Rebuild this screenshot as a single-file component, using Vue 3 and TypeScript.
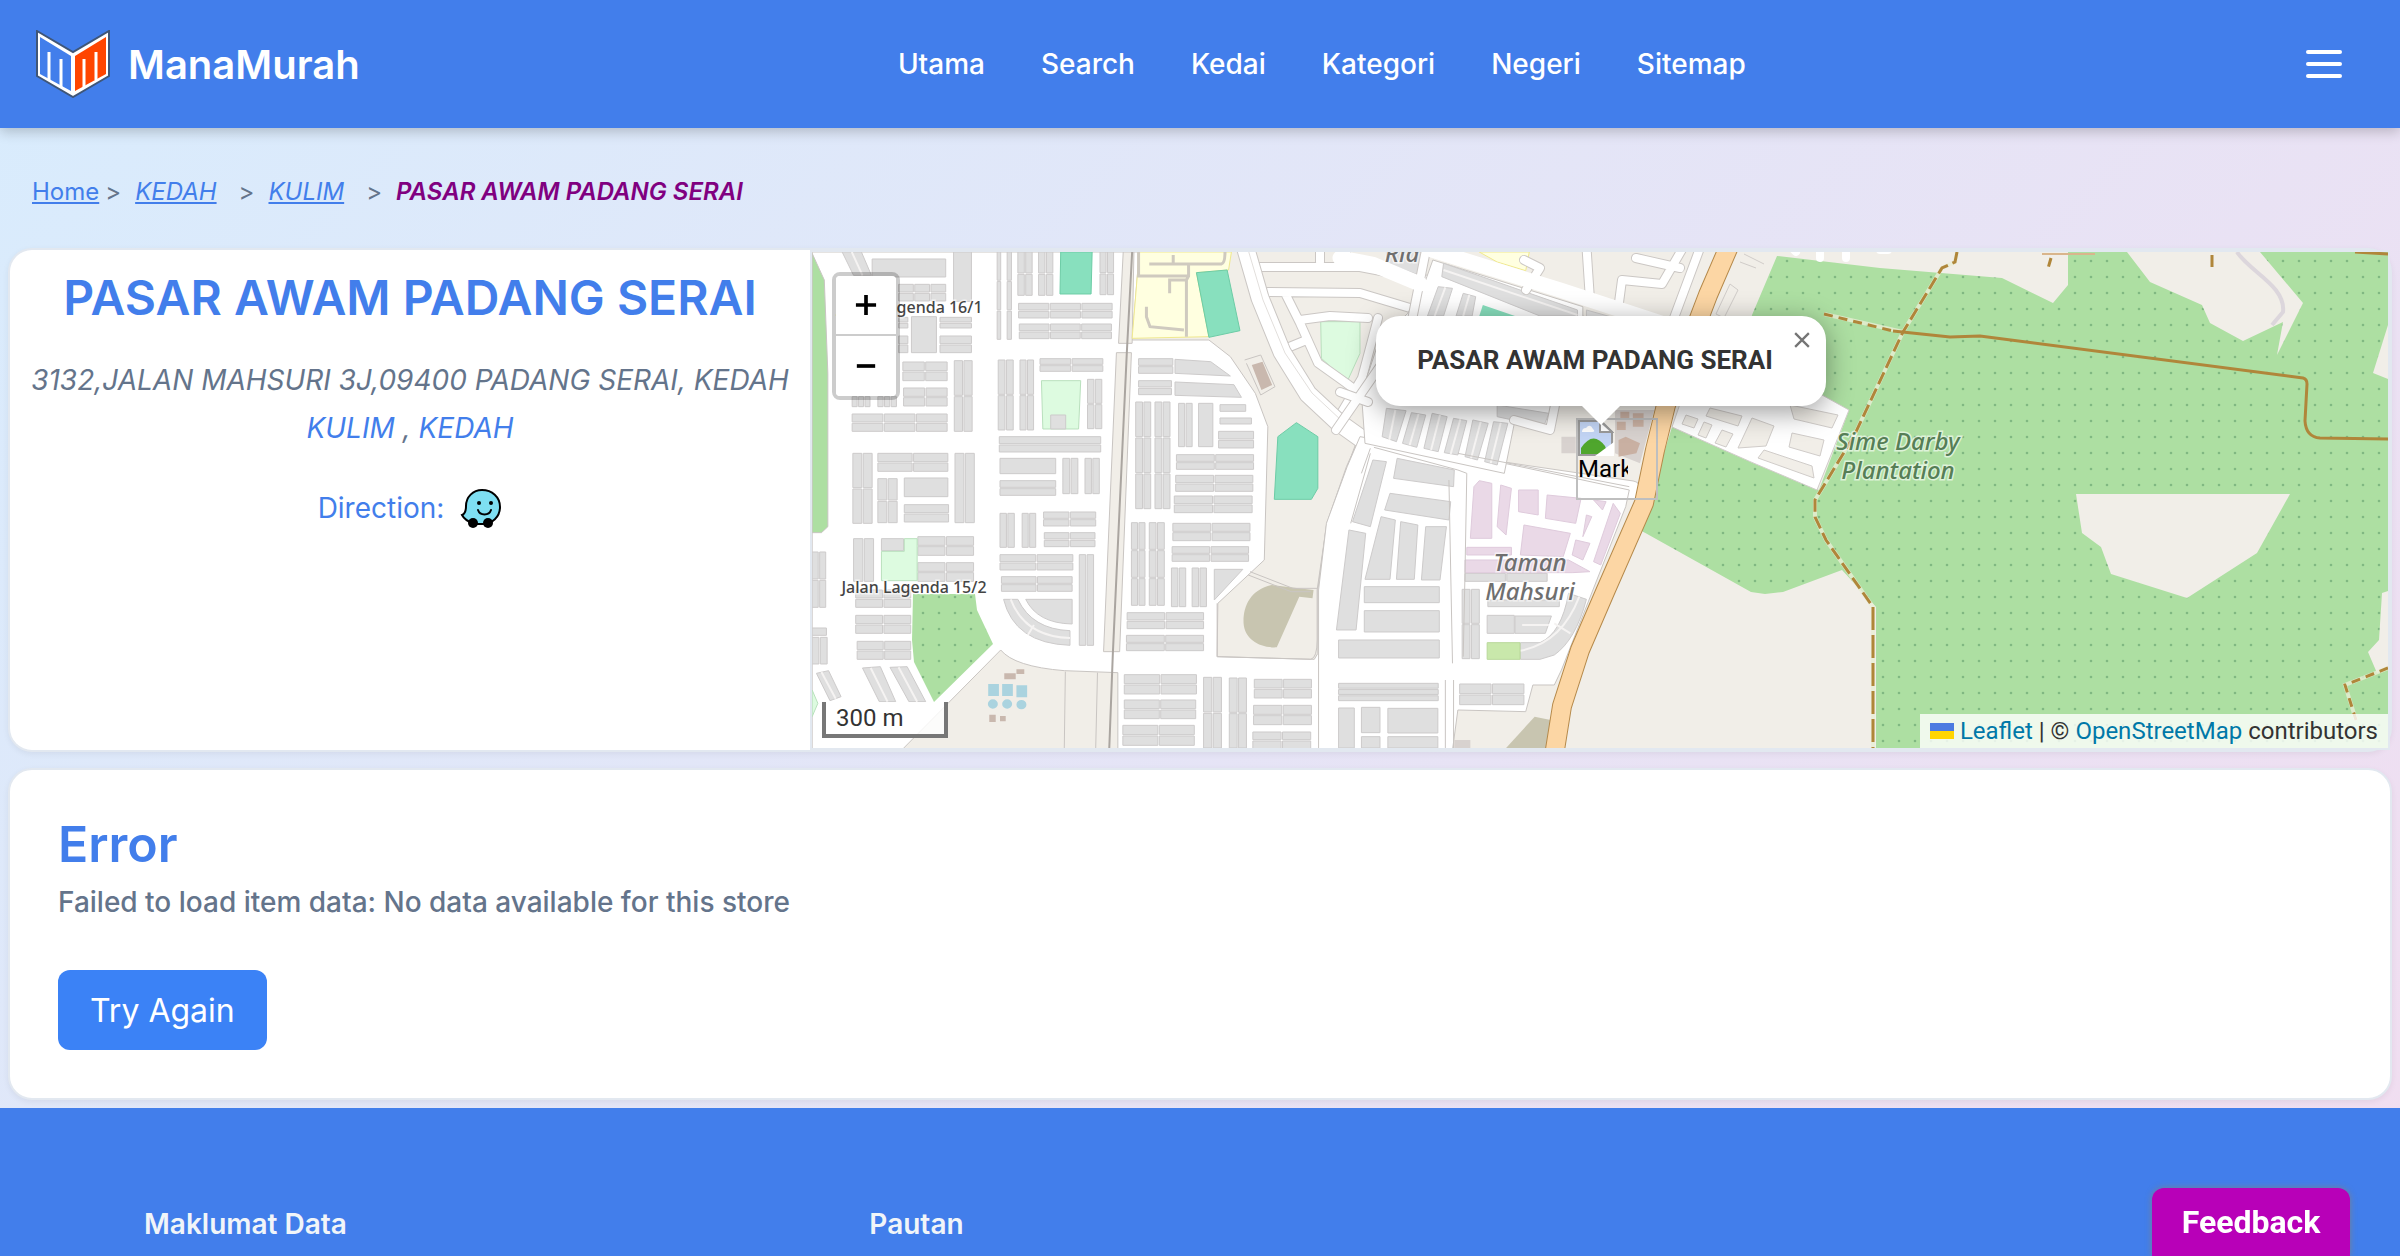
<script setup lang="ts">
type Block = [x: number, y: number, w: number, h: number, cols?: number, rows?: number]

const navLinks: string[] = ['Utama', 'Search', 'Kedai', 'Kategori', 'Negeri', 'Sitemap']
const storeName = 'PASAR AWAM PADANG SERAI'

// Terraced housing west of the trunk road: outline plus rows and columns of lots.
const westBlocks: Block[] = [
  [202, 57, 206, 54], [430, 36, 50, 148], [276, 133, 132, 50, 3, 2], [392, 232, 88, 32, 1, 2], [312, 230, 70, 108],
  [392, 288, 88, 50, 1, 2], [276, 232, 26, 32, 1, 2], [276, 288, 26, 50, 1, 2], [288, 366, 124, 56, 2, 2],
  [290, 444, 122, 54, 2, 2], [432, 362, 50, 212, 2, 2], [146, 470, 50, 30, 3, 1], [218, 470, 52, 30, 3, 1],
  [146, 522, 266, 52, 3, 2], [148, 640, 54, 210, 2, 2], [218, 640, 196, 54, 2, 2], [218, 716, 54, 132, 2, 2],
  [292, 714, 122, 56], [292, 794, 124, 52, 1, 2], [434, 640, 54, 208, 2, 1], [150, 896, 56, 128, 2, 1],
  [228, 896, 62, 36], [330, 890, 156, 56, 2, 2], [330, 968, 156, 56, 2, 2], [34, 936, 38, 166, 2, 2],
  [34, 1164, 40, 22], [34, 1192, 42, 80, 2, 1], [156, 1050, 154, 52, 2, 2], [156, 1126, 154, 54, 2, 2],
  [160, 1204, 150, 54, 2, 2], [552, 36, 10, 262, 1, 3], [580, 36, 12, 262, 1, 3], [610, 36, 40, 130, 2, 2],
  [668, 36, 40, 130, 2, 2], [840, 36, 38, 128, 2, 2], [612, 190, 262, 44, 3, 2], [614, 252, 258, 44, 3, 2],
  [555, 360, 42, 210, 2, 2], [616, 360, 38, 210, 2, 2], [672, 356, 176, 38, 2, 2],
  [805, 418, 40, 148, 2, 2], [558, 590, 284, 46, 1, 2], [560, 655, 156, 46], [560, 722, 156, 44, 1, 2],
  [736, 655, 42, 106, 2, 1], [798, 655, 40, 106, 2, 1], [560, 820, 40, 102, 2, 1], [622, 820, 38, 102, 2, 1],
  [682, 816, 146, 42, 2, 2], [684, 878, 142, 42, 2, 2], [560, 944, 204, 46, 2, 2], [564, 1010, 198, 44, 2, 2],
  [782, 944, 40, 272, 2, 1], [948, 356, 96, 44, 1, 2], [948, 422, 92, 42, 1, 2], [940, 486, 42, 320, 2, 3],
  [994, 486, 42, 320, 2, 3], [1060, 490, 38, 130, 2, 1], [1116, 490, 40, 130], [1176, 494, 72, 20],
  [1176, 534, 88, 18], [1172, 574, 98, 50, 1, 2], [1054, 644, 216, 44, 2, 2], [1052, 706, 216, 48, 2, 2],
  [1048, 768, 218, 50, 2, 2], [928, 848, 38, 248, 2, 3], [978, 848, 42, 248, 2, 3], [1044, 850, 216, 52, 2, 2],
  [1042, 920, 214, 44, 2, 2], [1040, 984, 40, 116, 2, 1], [1098, 984, 40, 116, 2, 1], [916, 1118, 214, 48, 2, 2],
  [914, 1186, 216, 46, 2, 2], [908, 1304, 202, 58, 2, 2], [908, 1380, 200, 56, 2, 2], [904, 1456, 200, 60, 2, 2],
  [1130, 1312, 50, 212, 2, 2], [1202, 1314, 48, 210, 2, 2], [1272, 1318, 160, 56, 2, 2], [1270, 1396, 162, 58, 2, 2],
  [1268, 1476, 162, 50, 2, 2],
]

// Taman Mahsuri, between the main street and the trunk road.
const eastBlocks: Block[] = [
  [68, 1040, 210, 48], [68, 1112, 210, 64], [-4, 1200, 282, 54], [-4, 1330, 279, 52, 1, 3], [-4, 1404, 44, 120],
  [60, 1402, 52, 76], [60, 1490, 52, 34], [134, 1405, 140, 74], [134, 1490, 140, 34], [342, 1048, 48, 208, 2, 2],
  [412, 1126, 76, 54], [350, 1000, 230, 24, 2, 1], [335, 1332, 180, 62, 2, 2], [414, 1080, 200, 20],
]

function blocksToPath(blocks: Block[]): string {
  const gap = 4
  const parts: string[] = []
  for (const [x, y, w, h, cols = 1, rows = 1] of blocks) {
    const cw = (w - gap * (cols - 1)) / cols
    const ch = (h - gap * (rows - 1)) / rows
    for (let c = 0; c < cols; c++) {
      for (let r = 0; r < rows; r++) {
        parts.push(`M${x + c * (cw + gap)} ${y + r * (ch + gap)}h${cw}v${ch}h${-cw}z`)
      }
    }
  }
  return parts.join('')
}

const westPath = blocksToPath(westBlocks)
const eastPath = blocksToPath(eastBlocks)
</script>

<template>
  <div class="page">
    <header class="topbar">
      <a class="brand" href="#">
        <svg class="brand-logo" viewBox="0 0 74 68" aria-hidden="true">
          <path d="M1 1 37 22 73 1V46L37 67 1 46Z" fill="#fff" stroke="#3f5678" stroke-width="2" />
          <path d="M4 7 35 26V61L4 44Z" fill="#427eeb" />
          <path d="M39 26 70 7V44L39 61Z" fill="#ff4500" />
          <path d="M13 22V50M25 29V57M48 29V57M60 22V50" fill="none" stroke="#fff" stroke-width="3" />
        </svg>
        <span class="brand-name">ManaMurah</span>
      </a>
      <nav class="nav">
        <a v-for="link in navLinks" :key="link" href="#">{{ link }}</a>
      </nav>
      <button class="menu" type="button" aria-label="Menu">
        <span></span><span></span><span></span>
      </button>
    </header>

    <nav class="crumbs" aria-label="Breadcrumb">
      <a href="#">Home</a><span class="sep first">&gt;</span>
      <a class="it" href="#">KEDAH</a><span class="sep">&gt;</span>
      <a class="it" href="#">KULIM</a><span class="sep">&gt;</span>
      <strong>{{ storeName }}</strong>
    </nav>

    <main>
      <section class="card store">
        <div class="info">
          <h1>{{ storeName }}</h1>
          <address>
            3132,JALAN MAHSURI 3J,09400 PADANG SERAI, KEDAH<br />
            <a href="#">KULIM</a> , <a href="#">KEDAH</a>
          </address>
          <a class="direction" href="#">
            Direction:
            <svg viewBox="0 0 42 40" aria-hidden="true">
              <path d="M22 2C32 2 40 9 40 19C40 29 32 36 23 36H14C9 34 4 31 2 27C5 26 6 23 6 18C6 9 13 2 22 2Z" fill="#7edff2" stroke="#000" stroke-width="2" />
              <circle cx="13" cy="35" r="5" /><circle cx="28" cy="35" r="5" />
              <circle cx="19" cy="15" r="2" /><circle cx="31" cy="15" r="2" />
              <path d="M18 22C20 28 29 28 31 22" fill="none" stroke="#000" stroke-width="2" stroke-linecap="round" />
            </svg>
          </a>
        </div>

        <div class="map">
          <svg class="tiles" viewBox="812 252 1576 496" preserveAspectRatio="xMidYMid slice" role="img" aria-label="Map">
            <defs>
              <pattern id="trees" x="1890" y="258" width="16" height="16" patternUnits="userSpaceOnUse">
                <rect width="16" height="16" fill="#addfa2" />
                <circle cx="9" cy="3" r="1.300" fill="#80b882" />
              </pattern>
            </defs>
            <rect x="812" y="252" width="1576" height="496" fill="#f1eee8" />

            <!-- western estates -->
            <g class="west" transform="translate(800 240) scale(.35714 .33333)">
              <path class="land" d="M34 36H950L930 300H1145L1205 350 1275 460 1310 560 1300 960 1170 1090 1168 1250 1440 1258 1450 1240 1450 1050 1475 850 1530 680 1568 590 1650 600V1530H890L890 1298 740 1292Q600 1280 562 1230L285 1530H34Z" />
              <path fill="#f1eee8" d="M905 36H935L930 310H892ZM886 338H928L895 1235H850Z" class="edge" />
              <path class="block" :d="westPath" />
              <path class="block" d="M118 36H172L200 106 150 106ZM1050 358 1150 365 1205 408 1050 400ZM1050 426 1215 434 1236 472 1050 466ZM1160 988H1240L1160 1080ZM175 1284 225 1280 268 1385H222ZM252 1282 300 1280 352 1385H305ZM46 1300 80 1292 115 1370 84 1382ZM632 1078H762V1152Q665 1150 632 1078ZM570 1078H610Q650 1168 756 1172V1216Q600 1210 570 1078Z" />
              <path class="seam" d="M198 1284 245 1385M276 1282 328 1385M590 1078Q630 1190 756 1194M638 1185 655 1155M60 1296 100 1376M145 36 175 106" />
              <path fill="#addfa2" class="edge" d="M34 40 68 120 78 400V860L60 878H34Z" />
              <path fill="#ddfbe0" class="edge-green" d="M228 934H292V896H328V1022H228ZM676 422H786L780 567H680ZM1458 245H1568L1568 340 1532 425 1460 355ZM34 1350 50 1390 34 1430Z" />
              <path class="block" d="M702 525H744V567H702Z" />
              <path fill="#88e0be" stroke="#6dcca6" vector-effect="non-scaling-stroke" d="M730 36H818L815 162H728ZM1390 548 1450 590V745L1432 778H1328L1338 590Z" />
              <path fill="#ffffe0" stroke="#f0e98e" vector-effect="non-scaling-stroke" d="M950 36H1208L1200 90 1110 98 1145 290 930 295Z" />
              <path fill="none" stroke="#cfcabf" stroke-width="3" vector-effect="non-scaling-stroke" d="M978 72H1180Q1190 70 1190 36M1045 45V72M1088 72V108L1082 120H1035V160M1082 120V290M970 200V230L980 260 1075 270M948 36V108H1088" />
              <path fill="#88e0be" stroke="#6dcca6" vector-effect="non-scaling-stroke" d="M1110 98 1196 90 1232 272 1145 292Z" />
              <path fill="#c8c5b0" d="M1320 1035C1260 1050 1240 1100 1242 1150C1245 1200 1290 1225 1335 1222L1398 1070 1435 1075 1438 1050Z" />
              <path class="edge" fill="none" d="M1260 995 1380 1045H1448M1255 1005 1375 1055H1430M1245 360 1290 345 1330 440 1290 465 1250 370M743 1295 740 1524M833 1298 828 1524M1168 1090V1250L1430 1258Q1448 1254 1448 1200V1050L1475 850 1560 600" />
              <path fill="#c9b8ae" d="M1265 375 1295 365 1322 435 1292 450ZM572 1300H604V1318H572ZM606 1288H628V1302H606ZM530 1424H548V1446H530ZM560 1428H576V1444H560Z" />
              <path fill="#aad3df" d="M527 1332H557V1368H527ZM566 1332H596V1368H566ZM606 1336H636V1372H606ZM526 1392a14 14 0 1 0 28 0a14 14 0 1 0-28 0M566 1392a14 14 0 1 0 28 0a14 14 0 1 0-28 0M606 1394a14 14 0 1 0 28 0a14 14 0 1 0-28 0" />
              <path fill="none" stroke="#aaa5a0" stroke-width="2" vector-effect="non-scaling-stroke" d="M930 36 915 340 876 1240 866 1524" />
            </g>
            <path fill="url(#trees)" d="M913 594H975L977 610 993 644 934 702 914 662 912 640Z" />

            <!-- streets in the north -->
            <g fill="none" stroke-linejoin="round" stroke-linecap="round">
              <path stroke="#cbc7c4" stroke-width="10" d="M1258 267H1360L1480 290M1268 292 1360 293 1410 308M1300 320 1330 316 1368 318M1286 295 1300 323 1318 363 1346 383 1362 395M1282 350 1304 341M1340 415 1362 378 1378 318M1320 262V246M1346 246V265" />
              <path stroke="#fff" stroke-width="8" d="M1258 267H1360L1480 290M1268 292 1360 293 1410 308M1300 320 1330 316 1368 318M1286 295 1300 323 1318 363 1346 383 1362 395M1282 350 1304 341M1340 415 1362 378 1378 318M1320 262V246M1346 246V265" />
              <path stroke="#cbc7c4" stroke-width="19" d="M1245 246 1260 298 1282 352 1308 394 1338 422 1366 442 1470 466 1632 490" />
              <path stroke="#fff" stroke-width="17" d="M1245 246 1260 298 1282 352 1308 394 1338 422 1366 442 1470 466 1632 490" />
              <path stroke="#e2dfdc" d="M1247 246 1263 300 1285 353 1312 393 1342 421" />
            </g>

            <!-- Taman Mahsuri -->
            <g transform="translate(1340 240) scale(.35714 .33333)">
              <path class="land" d="M56 590 330 640 810 750 800 800 620 1290 600 1335 540 1335 520 1415 330 1410 315 1530H-60V1050L-38 850 20 680Z" />
              <path class="land" d="M60 460 110 300 190 220 240 120 260 60 680 200V228L880 290 590 500 600 570 490 540 460 700 70 610Z" />
              <path class="block" :d="eastPath" />
              <path class="block" d="M92 660 130 665 85 860 35 845ZM25 870 72 880 45 1170H-10ZM160 655 320 690 318 740 150 715ZM140 760 310 785 305 840 125 810ZM115 830 155 840 140 1018H70ZM170 845 218 855 208 1018H158ZM240 860 298 860 280 1020H228ZM290 70 665 210V228H560L285 110ZM275 140 315 145 290 228H245ZM345 160 380 170 370 228H325ZM130 36H240L220 105 130 70ZM490 1128H592L575 1180H490ZM505 1208H560Q620 1180 640 1060L690 1078Q660 1200 600 1245L560 1258H505ZM130 505 185 512 158 605 118 590ZM200 518 240 525 215 622 175 610ZM258 520 300 530 275 635 235 625ZM318 535 355 542 330 645 292 638ZM372 540 415 550 385 660 350 650ZM430 545 470 550 440 675 405 665ZM440 495 585 520 570 560 440 530ZM690 210 840 255H690Z" />
              <path class="seam" d="M290 90 665 225M155 510 138 600M220 522 195 616M280 525 255 630M337 538 310 642M394 545 367 655M450 548 422 670M295 142 265 228M362 165 345 228M670 1070Q620 1210 505 1232M600 1150 645 1180M510 1155H585" />
              <path fill="#88e0be" d="M400 195 490 228H390Z" />
              <path fill="#ffffe0" stroke="#f0e98e" vector-effect="non-scaling-stroke" d="M390 36H530L520 92 440 66Z" />
              <path fill="#ead9e7" stroke="#dfcbdc" vector-effect="non-scaling-stroke" d="M375 740 390 722 425 730V895H365ZM450 735 480 745 465 885 440 860ZM500 750 555 750V825L500 815ZM580 765 675 775 660 850 575 835ZM515 855 645 880 625 950 505 945ZM355 922H480V945H355ZM350 960H640L700 995 650 998H350ZM765 790 785 820 730 975 710 965ZM690 825 705 830 680 890ZM710 780 745 785 735 810ZM660 900 700 910 680 960 650 945Z" />
              <path fill="#c9e8ab" stroke="#b9d89b" vector-effect="non-scaling-stroke" d="M412 1208H504V1258H412Z" />
              <path fill="#c8c5b0" d="M545 1430 590 1440 580 1524H465Z" />
              <path fill="#d8d2cf" d="M770 510H880L840 670 770 640ZM620 590H660V640H620ZM320 1500H365V1524H320Z" />
              <path fill="#c9b0a2" d="M785 515H810V540H785ZM820 520H850V560H820ZM775 545H800V570H775ZM780 600 800 590 840 610 830 640 780 650Z" />
              <path class="edge" fill="none" d="M95 622 330 690 355 700 350 1000 345 1250M330 640 810 740M305 720 315 1270M295 1320V1524M318 1320V1524M85 640 30 850M85 625 60 700" />
            </g>
            <g fill="none" stroke-linejoin="round" stroke-linecap="round">
              <path stroke="#cbc7c4" stroke-width="10" d="M1586 240 1590 300M1618 310 1622 280 1662 284 1684 246M1636 258 1680 268M1524 260 1540 268 1526 290M1674 318 1700 248M1514 420 1550 430 1555 405M1340 392 1368 402M1336 430 1412 320 1426 250" />
              <path stroke="#fff" stroke-width="8" d="M1586 240 1590 300M1618 310 1622 280 1662 284 1684 246M1636 258 1680 268M1524 260 1540 268 1526 290M1674 318 1700 248M1514 420 1550 430 1555 405M1340 392 1368 402M1336 430 1412 320 1426 250" />
              <path stroke="#fff" stroke-width="15" d="M1340 258 1372 264 1420 284M1432 250 1560 290 1676 328" />
            </g>

            <!-- plantation -->
            <path fill="url(#trees)" d="M1777 256 1752 315 1740 398H1822L1849 410 1819 490 1751 462 1672 427 1640 530 1751 592 1765 594 1783 592 1842 570 1876 607V748H2388V252H2260L2303 303 2277 355 2283 322 2243 341 2210 323 2202 305 2150 282 2127 252H2068V285L2053 303 2002 278 1880 268Z" />
            <path fill="#f1eee8" d="M2076 494H2290L2257 553 2187 598 2111 574 2101 547 2082 533ZM2388 325 2373 373 2388 379ZM2388 591 2382 593 2379 640 2368 652 2377 673 2388 668Z" />

            <!-- housing beside the plantation -->
            <path fill="#fff" stroke="#d0ccc9" d="M1682 398 1822 395 1849 410 1817 490 1751 462 1672 427Z" />
            <path fill="#f1eee8" stroke="#d0ccc9" d="M1710 408 1742 416 1738 426 1706 416ZM1686 415 1698 419 1694 428 1682 424ZM1704 422 1712 425 1706 438 1698 435ZM1722 430 1733 434 1726 447 1715 443ZM1752 418 1774 426 1766 446 1738 448ZM1764 450 1812 466 1814 478 1758 458ZM1790 405 1838 415 1832 428 1794 419ZM1792 433 1824 440 1820 456 1789 447Z" />
            <g fill="none" stroke="#d0ccc9">
              <path d="M1730 284 1738 290 1724 318 1716 314ZM1744 254 1764 264M1740 262 1756 268" />
              <path stroke="#fff" stroke-width="8" stroke-linecap="round" d="M1790 246 1796 252M1820 244V258M1846 246V258M1880 250H1888" />
              <path stroke="#dcd6dc" stroke-width="4" d="M2237 252C2250 272 2286 286 2283 312L2272 325" />
            </g>

            <!-- trunk road -->
            <g fill="none" stroke-linejoin="round">
              <path stroke="#b5894a" stroke-width="20" d="M1730 244 1708 295 1666 405 1655 450 1644 503 1605 592 1580 650 1562 706 1554 756" />
              <path stroke="#fcd6a4" stroke-width="18" d="M1730 244 1708 295 1666 405 1655 450 1644 503 1605 592 1580 650 1562 706 1554 756" />
            </g>

            <!-- tracks -->
            <g fill="none" stroke="#e9edd5" stroke-width="4" opacity=".800">
              <path d="M1957 252 1955 262 1942 268 1903 332 1854 436 1815 500V517L1826 540 1873 607V748M1824 314 1903 332M2388 668 2345 685 2356 720" />
            </g>
            <g fill="none" stroke="#b0863a" stroke-width="3">
              <path d="M1893 331 1950 337 1980 336 2303 378Q2307 379 2307 384L2305 421Q2306 437 2320 438L2388 439" />
              <path stroke-dasharray="13 5" d="M1957 252 1955 262 1942 268 1903 332 1854 436 1815 500V517L1826 540 1873 607" />
              <path stroke-dasharray="23 5" d="M1873 607V748" />
              <path stroke-dasharray="9 6" d="M1824 314 1893 331M2388 668 2345 685 2356 720M2051 258 2047 272" />
              <path d="M2212 255V267M2355 252 2388 254" />
              <path stroke="#d9b58c" stroke-width="2" d="M2042 254H2095" />
            </g>

            <g class="labels" text-anchor="middle">
              <text class="street" x="914" y="593">Jalan Lagenda 15/2</text>
              <text class="street" x="910" y="313">Jalan Lagenda 16/1</text>
              <text x="1530" y="571">Taman</text>
              <text x="1530" y="600">Mahsuri</text>
              <text x="1402" y="262">Ria</text>
              <text class="forest" x="1898" y="450">Sime Darby</text>
              <text class="forest" x="1898" y="479">Plantation</text>
            </g>
          </svg>

          <div class="zoom">
            <button type="button" aria-label="Zoom in"><svg viewBox="0 0 24 24"><path d="M12 1V23M1 12H23" stroke="#000" stroke-width="4" /></svg></button>
            <button type="button" aria-label="Zoom out"><svg viewBox="0 0 24 24"><path d="M2 12H22" stroke="#000" stroke-width="4" /></svg></button>
          </div>
          <div class="scale">300 m</div>

          <div class="marker">
            <svg viewBox="0 0 36 36" aria-hidden="true">
              <path d="M1 1H23L34 12V35H1Z" fill="#c3d5f5" stroke="#9a9a9a" stroke-width="2" />
              <path d="M4 12Q4 8 8 8Q12 3 15 9Q18 12 14 12Z" fill="#fff" />
              <path d="M3 34V28Q15 10 27 26L30 34Z" fill="#4fa62d" />
              <path d="M22 1V12H34Z" fill="#fff" stroke="#9a9a9a" stroke-width="2" />
              <path d="M17 36 36 22V36Z" fill="#fff" />
            </svg>
            <span>Marker</span>
          </div>
          <div class="popup">
            <strong>{{ storeName }}</strong>
            <button type="button" aria-label="Close popup"><svg viewBox="0 0 14 14"><path d="M1 1 13 13M13 1 1 13" stroke="#757575" stroke-width="2" /></svg></button>
            <i class="tip"></i>
          </div>
          <div class="attribution">
            <svg viewBox="0 0 24 16" aria-hidden="true"><path fill="#4c7be1" d="M0 0h24v8H0z" /><path fill="#ffd500" d="M0 8h24v8H0z" /></svg>
            <a href="#">Leaflet</a> | © <a href="#">OpenStreetMap</a> contributors
          </div>
        </div>
      </section>

      <section class="card error">
        <h2>Error</h2>
        <p>Failed to load item data: No data available for this store</p>
        <button type="button">Try Again</button>
      </section>
    </main>

    <footer class="footer">
      <h3>Maklumat Data</h3>
      <h3>Pautan</h3>
    </footer>
    <button class="feedback" type="button">Feedback</button>
  </div>
</template>

<style>
body {
  margin: 0;
}
</style>

<style scoped>
* {
  box-sizing: border-box;
}
.page {
  min-height: 100vh;
  display: flex;
  flex-direction: column;
  font-family: Inter, "Liberation Sans", sans-serif;
  font-size: 28px;
  color: #64748b;
  background: linear-gradient(135deg, #d8ecfd, #f5dbee 115%);
  overflow: hidden;
}
a {
  color: #427eeb;
  text-decoration: none;
}
button {
  border: 0;
  padding: 0;
  font: inherit;
  cursor: pointer;
}
.topbar {
  height: 128px;
  padding: 0 36px;
  display: flex;
  align-items: center;
  justify-content: space-between;
  background: #427eeb;
  box-shadow: 0 4px 12px rgba(0, 0, 0, 0.2);
}
.brand {
  display: flex;
  align-items: center;
  gap: 18px;
}
.brand-logo {
  width: 74px;
  height: 68px;
}
.brand-name {
  font-size: 40px;
  font-weight: 600;
  color: #fff;
}
.nav {
  display: flex;
  gap: 56px;
}
.nav a {
  color: #fff;
  font-weight: 500;
}
.menu {
  width: 80px;
  height: 64px;
  display: flex;
  flex-direction: column;
  align-items: center;
  justify-content: center;
  gap: 8px;
  background: none;
}
.menu span {
  width: 36px;
  height: 4px;
  border-radius: 2px;
  background: #fff;
}
.crumbs {
  height: 120px;
  padding: 6px 32px 0;
  display: flex;
  align-items: center;
  font-size: 24px;
}
.crumbs a {
  text-decoration: underline;
}
.crumbs .it,
.crumbs strong {
  font-style: italic;
}
.crumbs strong {
  font-weight: 600;
  color: #800080;
}
.sep {
  margin: 0 14px 0 22px;
}
.sep.first {
  margin-left: 6px;
}
main {
  padding: 0 8px 8px;
  display: flex;
  flex-direction: column;
  gap: 16px;
}
.card {
  background: #fff;
  border: 2px solid #e2e8f0;
  border-radius: 24px;
  box-shadow: 0 2px 6px rgba(0, 0, 0, 0.06);
}
.store {
  display: flex;
  background: #e2e8f0;
}
.info {
  flex: 0 0 800px;
  display: flex;
  flex-direction: column;
  align-items: center;
  padding-top: 18px;
  text-align: center;
  background: #fff;
  border-radius: 22px 0 0 22px;
}
h1,
h2,
h3,
p {
  margin: 0;
}
h1 {
  font-size: 48px;
  line-height: 60px;
  font-weight: 600;
  color: #427eeb;
  white-space: nowrap;
}
address {
  margin-top: 28px;
  line-height: 48px;
  white-space: nowrap;
}
.direction {
  margin-top: 36px;
  display: flex;
  align-items: center;
  gap: 16px;
}
.direction svg {
  width: 42px;
  height: 40px;
}
.map {
  position: relative;
  flex: 1;
  min-width: 0;
  height: 500px;
  border: 2px solid #e2e8f0;
  overflow: hidden;
  font-family: Roboto, "Liberation Sans", sans-serif;
  font-size: 24px;
  color: #333;
}
.tiles {
  display: block;
  width: 100%;
  height: 100%;
}
.land {
  fill: #fff;
  stroke: #c9c5c2;
  vector-effect: non-scaling-stroke;
}
.block {
  fill: #dfdfdf;
  stroke: #cdcbcb;
  vector-effect: non-scaling-stroke;
}
.seam {
  fill: none;
  stroke: #f5f3f2;
  stroke-width: 2px;
  vector-effect: non-scaling-stroke;
}
.edge {
  stroke: #c9c5c2;
  vector-effect: non-scaling-stroke;
}
.edge-green {
  stroke: #b9e0bd;
  vector-effect: non-scaling-stroke;
}
.labels text {
  font-family: "Noto Sans", "Open Sans", sans-serif;
  font-size: 24px;
  font-style: italic;
  font-weight: 500;
  fill: #6f6f6f;
  stroke: rgba(255, 255, 255, 0.6);
  stroke-width: 3px;
  paint-order: stroke;
}
.labels .street {
  font-size: 16px;
  font-style: normal;
  fill: #444;
}
.labels .forest {
  fill: #567e56;
}
.zoom {
  position: absolute;
  left: 20px;
  top: 20px;
  width: 68px;
  border: 4px solid rgba(0, 0, 0, 0.2);
  border-radius: 8px;
  background-clip: padding-box;
}
.zoom button {
  display: flex;
  align-items: center;
  justify-content: center;
  width: 60px;
  height: 60px;
  background: #fff;
  border-radius: 0 0 4px 4px;
}
.zoom button:first-child {
  border-bottom: 2px solid #ccc;
  border-radius: 4px 4px 0 0;
}
.zoom svg {
  width: 22px;
  height: 22px;
}
.scale {
  position: absolute;
  left: 10px;
  bottom: 10px;
  width: 126px;
  height: 36px;
  padding-left: 10px;
  line-height: 32px;
  border: 4px solid #777;
  border-top: 0;
  background: rgba(255, 255, 255, 0.8);
}
.marker {
  position: absolute;
  left: 764px;
  top: 166px;
  width: 82px;
  height: 82px;
  border: 2px solid #bfbfbf;
  color: #000;
  line-height: 26px;
}
.marker svg {
  display: block;
  width: 36px;
  height: 36px;
}
.marker span {
  display: block;
  width: 50px;
  overflow: hidden;
}
.popup {
  position: absolute;
  left: 564px;
  top: 64px;
  width: 450px;
  height: 90px;
  display: flex;
  align-items: center;
  justify-content: center;
  padding: 0 12px 2px 0;
  font-size: 26px;
  background: #fff;
  border-radius: 24px;
  box-shadow: 0 6px 28px rgba(0, 0, 0, 0.4);
}
.popup button {
  position: absolute;
  right: 16px;
  top: 16px;
  display: flex;
  background: none;
}
.popup button svg {
  width: 16px;
  height: 16px;
}
.tip {
  position: absolute;
  left: 205px;
  top: 89px;
  border: 20px solid transparent;
  border-top-color: #fff;
  border-bottom: 0;
}
.attribution {
  position: absolute;
  right: 0;
  bottom: 0;
  padding: 0 10px;
  line-height: 34px;
  white-space: nowrap;
  background: rgba(255, 255, 255, 0.8);
}
.attribution a {
  color: #0078a8;
}
.attribution svg {
  width: 24px;
  height: 16px;
  margin-right: 6px;
}
.error {
  padding: 38px 48px 48px;
  display: flex;
  flex-direction: column;
  align-items: flex-start;
}
.error h2 {
  font-size: 50px;
  line-height: 72px;
  font-weight: 600;
  color: #427eeb;
}
.error p {
  line-height: 44px;
  font-weight: 500;
}
.error button {
  margin-top: 46px;
  padding: 0 32px;
  height: 80px;
  font-size: 32px;
  color: #fff;
  background: #3b82f6;
  border-radius: 12px;
}
.footer {
  flex: 1 0 148px;
  display: grid;
  grid-template-columns: 1fr 2fr;
  column-gap: 32px;
  padding: 98px 144px 0;
  background: #427eeb;
}
.footer h3 {
  font-size: 28px;
  line-height: 36px;
  font-weight: 600;
  color: #f1f5f9;
}
.feedback {
  position: fixed;
  right: 50px;
  bottom: 0;
  width: 198px;
  height: 68px;
  font: 700 32px/68px Roboto, "Liberation Sans", sans-serif;
  color: #fff;
  background: #b800b8;
  border-radius: 12px 12px 0 0;
  box-shadow: 0 0 6px rgba(128, 128, 128, 0.9);
}
</style>
